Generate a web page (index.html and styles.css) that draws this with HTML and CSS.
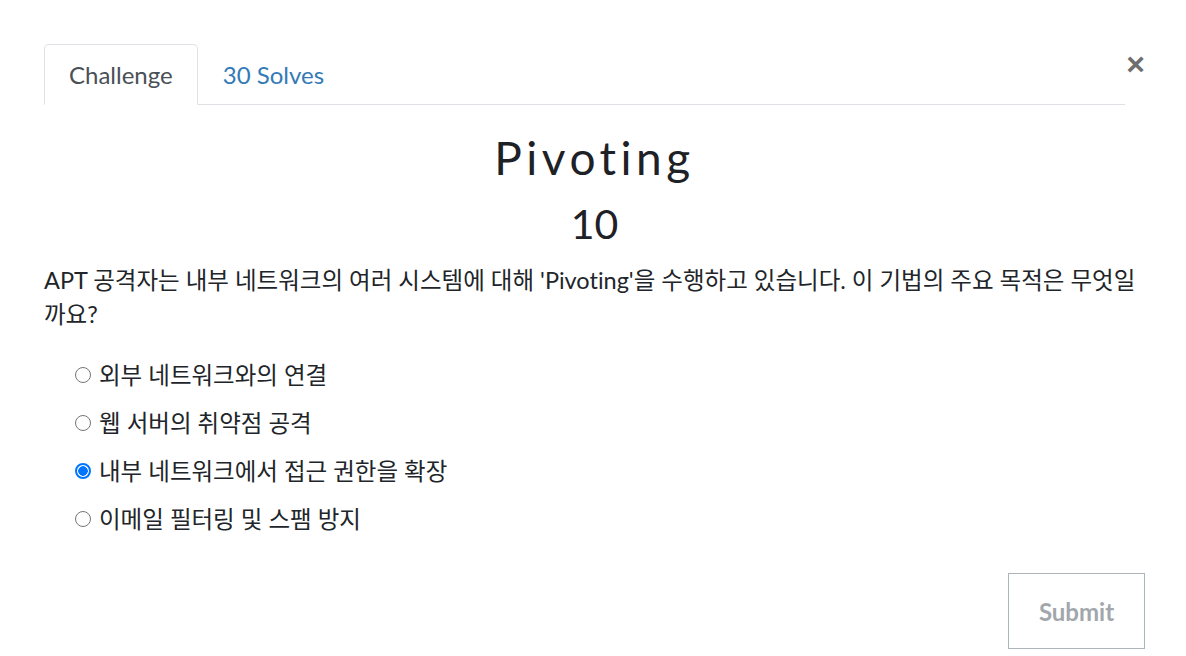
FILE: index.html
```html
<!DOCTYPE html>
<html lang="ko">
<head>
    <meta charset="UTF-8">
    <meta name="viewport" content="width=device-width, initial-scale=1.0">
    <title>Pivoting</title>
    <link rel="stylesheet" href="styles.css">
</head>
<body>
    <div class="modal-body">
        <div class="modal-head">
            <ul class="nav-tabs">
                <li class="nav-item active">Challenge</li>
                <li class="nav-item">30 Solves</li>
            </ul>
            <button class="close" aria-label="Close">&times;</button>
        </div>

        <h3 class="challenge-name">Pivoting</h3>
        <h4 class="challenge-value">10</h4>

        <p class="challenge-desc">APT 공격자는 내부 네트워크의 여러 시스템에 대해 'Pivoting'을 수행하고 있습니다. 이 기법의 주요 목적은 무엇일까요?</p>

        <form class="choices">
            <label class="choice"><input type="radio" name="answer"> 외부 네트워크와의 연결</label>
            <label class="choice"><input type="radio" name="answer"> 웹 서버의 취약점 공격</label>
            <label class="choice"><input type="radio" name="answer" checked> 내부 네트워크에서 접근 권한을 확장</label>
            <label class="choice"><input type="radio" name="answer"> 이메일 필터링 및 스팸 방지</label>
        </form>

        <div class="actions">
            <button class="btn-submit" disabled>Submit</button>
        </div>
    </div>
</body>
</html>
```

FILE: styles.css
```css
body {
    margin: 0;
    background-color: #fff;
    color: #212529;
    font-family: Lato, "Noto Sans CJK KR", sans-serif;
    font-size: 23.5px;
    font-variant-ligatures: none;
}
.modal-body {
    width: 1101px;
    padding: 44px 0 0 44px;
}
.modal-head {
    display: flex;
    align-items: flex-start;
}
.nav-tabs {
    flex: 1;
    display: flex;
    list-style: none;
    margin: 0;
    padding: 0;
    border-bottom: 1px solid #dee2e6;
    font-size: 24px;
}
.nav-item {
    padding: 14px 24px;
    line-height: 31px;
    border: 1px solid transparent;
    border-top-left-radius: 5px;
    border-top-right-radius: 5px;
    margin-bottom: -1px;
    color: #337ab7;
}
.nav-item.active {
    color: #495057;
    border-color: #dee2e6 #dee2e6 #fff;
    background-color: #fff;
}
.close {
    width: 20px;
    padding: 0;
    margin: 6px 0 0 0;
    border: none;
    background: none;
    font-family: "Liberation Sans", sans-serif;
    font-size: 32px;
    font-weight: bold;
    line-height: 28px;
    color: #6e6e6e;
    text-align: right;
}
.challenge-name {
    margin: 26px 0 0;
    text-align: center;
    font-size: 46px;
    font-weight: normal;
    letter-spacing: 4.5px;
    line-height: 54px;
    color: #1e2126;
}
.challenge-value {
    margin: 12px 0 0;
    text-align: center;
    font-size: 41px;
    font-weight: normal;
    line-height: 53px;
    color: #1e2126;
}
.challenge-desc {
    margin: 13px 0 0;
    line-height: 34px;
}
.choices {
    margin-top: 27px;
    padding-left: 30px;
}
.choice {
    display: flex;
    align-items: center;
    line-height: 34px;
    margin-bottom: 14px;
}
.choice input {
    appearance: none;
    -webkit-appearance: none;
    box-sizing: border-box;
    width: 16px;
    height: 16px;
    margin: 0 8px 0 1px;
    border: 1.5px solid #767676;
    border-radius: 50%;
    background: #fff;
}
.choice input:checked {
    border: 2px solid #0075ff;
    background: radial-gradient(circle, #0075ff 0 4.5px, #fff 5px);
}
.actions {
    display: flex;
    justify-content: flex-end;
    margin-top: 37px;
}
.btn-submit {
    width: 137px;
    height: 76px;
    border: 1px solid #adb5bd;
    background: #fff;
    color: #a2a7ac;
    font-family: Lato, sans-serif;
    font-size: 24px;
    font-weight: bold;
}
```
